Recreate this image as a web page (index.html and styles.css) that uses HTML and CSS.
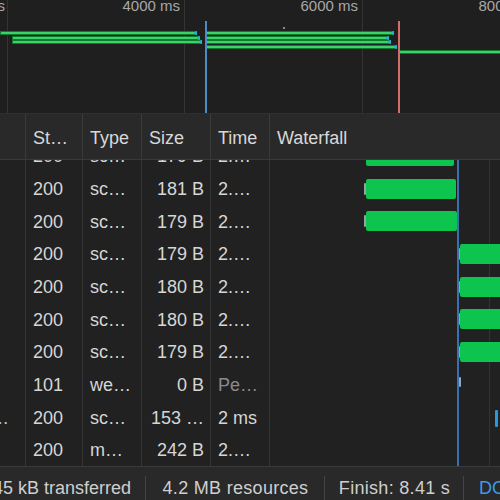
FILE: index.html
```html
<!DOCTYPE html>
<html>
<head>
<meta charset="utf-8">
<link rel="stylesheet" href="styles.css">
</head>
<body>
<div class="panel">
  <div class="overview">
    <div class="grid-line" style="left:7px"></div>
    <div class="grid-line" style="left:184px"></div>
    <div class="grid-line" style="left:362px"></div>
    <span class="tick" style="right:495px">2000 ms</span>
    <span class="tick" style="right:320px">4000 ms</span>
    <span class="tick" style="right:142px">6000 ms</span>
    <span class="tick" style="right:-36px">8000 ms</span>

    <div class="ov-bar" style="left:0;top:31px;width:193px"></div>
    <div class="ov-bar" style="left:12px;top:36px;width:184px"></div>
    <div class="ov-bar" style="left:12px;top:40px;width:186px"></div>

    <div class="ov-bar" style="left:205px;top:31px;width:185px"></div>
    <div class="ov-bar" style="left:205px;top:36px;width:180px"></div>
    <div class="ov-bar" style="left:205px;top:40px;width:182px"></div>
    <div class="ov-bar" style="left:205px;top:45px;width:188px"></div>

    <div class="ov-bar plain" style="left:399px;top:50px;width:110px"></div>
    <div class="ov-dot" style="left:283px;top:27px"></div>

    <div class="ov-line dcl" style="left:205px"></div>
    <div class="ov-line load" style="left:398px"></div>
  </div>

  <div class="row header">
    <div class="cell name"></div>
    <div class="cell">St…</div>
    <div class="cell">Type</div>
    <div class="cell">Size</div>
    <div class="cell">Time</div>
    <div class="cell">Waterfall</div>
  </div>

  <div class="rows">
    <div class="wf-grid" style="left:489px"></div>
    <div class="rows-inner">
      <div class="row">
        <div class="cell name"></div><div class="cell">200</div><div class="cell">sc…</div><div class="cell num">179 B</div><div class="cell">2.…</div>
        <div class="cell wf"><div class="wbar" style="left:96px;width:88px"></div></div>
      </div>
      <div class="row">
        <div class="cell name"></div><div class="cell">200</div><div class="cell">sc…</div><div class="cell num">181 B</div><div class="cell">2.…</div>
        <div class="cell wf"><div class="stub" style="left:94px"></div><div class="wbar" style="left:96px;width:90px"></div></div>
      </div>
      <div class="row">
        <div class="cell name"></div><div class="cell">200</div><div class="cell">sc…</div><div class="cell num">179 B</div><div class="cell">2.…</div>
        <div class="cell wf"><div class="stub" style="left:94px"></div><div class="wbar" style="left:96px;width:91px"></div></div>
      </div>
      <div class="row">
        <div class="cell name"></div><div class="cell">200</div><div class="cell">sc…</div><div class="cell num">179 B</div><div class="cell">2.…</div>
        <div class="cell wf"><div class="stub" style="left:188px"></div><div class="wbar" style="left:190px;width:60px"></div></div>
      </div>
      <div class="row">
        <div class="cell name"></div><div class="cell">200</div><div class="cell">sc…</div><div class="cell num">180 B</div><div class="cell">2.…</div>
        <div class="cell wf"><div class="stub" style="left:188px"></div><div class="wbar" style="left:190px;width:60px"></div></div>
      </div>
      <div class="row">
        <div class="cell name"></div><div class="cell">200</div><div class="cell">sc…</div><div class="cell num">180 B</div><div class="cell">2.…</div>
        <div class="cell wf"><div class="stub" style="left:188px"></div><div class="wbar" style="left:190px;width:60px"></div></div>
      </div>
      <div class="row">
        <div class="cell name"></div><div class="cell">200</div><div class="cell">sc…</div><div class="cell num">179 B</div><div class="cell">2.…</div>
        <div class="cell wf"><div class="stub" style="left:188px"></div><div class="wbar" style="left:190px;width:60px"></div></div>
      </div>
      <div class="row">
        <div class="cell name"></div><div class="cell">101</div><div class="cell">we…</div><div class="cell num">0 B</div><div class="cell dim">Pe…</div>
        <div class="cell wf"><div class="stub ws" style="left:189px"></div></div>
      </div>
      <div class="row">
        <div class="cell name trunc">…</div><div class="cell">200</div><div class="cell">sc…</div><div class="cell num">153 …</div><div class="cell">2 ms</div>
        <div class="cell wf"><div class="bbar" style="left:225px"></div></div>
      </div>
      <div class="row">
        <div class="cell name"></div><div class="cell">200</div><div class="cell">m…</div><div class="cell num">242 B</div><div class="cell">2.…</div>
        <div class="cell wf"></div>
      </div>
    </div>
    <div class="wf-dcl" style="left:457px"></div>
  </div>

  <div class="footer">
    <span class="fitem first">45 kB transferred</span>
    <span class="fitem mid res">4.2 MB resources</span>
    <span class="fitem mid fin">Finish: 8.41 s</span>
    <span class="fitem last">DOMContentLoaded: 2.66 s</span>
  </div>
</div>
</body>
</html>
```

FILE: styles.css
```css
html, body {
  margin: 0;
  padding: 0;
  width: 500px;
  height: 500px;
  overflow: hidden;
  background: #202020;
}

.panel {
  width: 500px;
  height: 500px;
  display: flex;
  flex-direction: column;
  font-family: "Liberation Sans", Arial, sans-serif;
  font-size: 18px;
  color: #d6d6d6;
  white-space: nowrap;
  overflow: hidden;
}

/* ---------- overview timeline ---------- */
.overview {
  position: relative;
  height: 113px;
  flex: none;
  background: #1f1f1f;
  border-bottom: 1px solid #2f2f2f;
  overflow: hidden;
}

.grid-line {
  position: absolute;
  top: 0;
  bottom: 0;
  width: 1px;
  background: #343434;
}

.tick {
  position: absolute;
  top: -2px;
  font-size: 15px;
  line-height: 15px;
  color: #a8a8a8;
}

.ov-bar {
  position: absolute;
  height: 2px;
  background: #3ad36a;
  border: 1px solid #12792f;
  border-right: 3px solid #2bb3c9;
}

.ov-bar.plain {
  border-right: 1px solid #12792f;
}

.ov-dot {
  position: absolute;
  width: 2px;
  height: 2px;
  background: #8a8a8a;
}

.ov-line {
  position: absolute;
  top: 21px;
  bottom: 0;
  width: 2px;
}

.ov-line.dcl {
  background: #4a8cc8;
}

.ov-line.load {
  background: #d36d68;
}

/* ---------- table ---------- */
.row {
  display: grid;
  grid-template-columns: 25px 57px 59px 69px 59px 1fr;
  height: 32.67px;
}

.cell {
  display: flex;
  align-items: center;
  padding: 3px 0 0 7px;
  border-left: 1px solid #363636;
  overflow: hidden;
}

.cell.name {
  border-left: none;
  padding: 3px 0 0 0;
}

.cell.trunc {
  justify-content: flex-end;
  padding-right: 16px;
  color: #c8c8c8;
}

.cell.num {
  justify-content: flex-end;
  padding: 3px 6px 0 0;
}

.cell.dim {
  color: #8a8a8a;
}

.header {
  height: 45px;
  flex: none;
  background: #292929;
  border-bottom: 1px solid #3a3a3a;
  color: #d8d8d8;
}

.header .cell {
  border-left-color: #3a3a3a;
}

.rows {
  position: relative;
  height: 306px;
  flex: none;
  overflow: hidden;
  background: #212121;
}

.rows-inner {
  position: relative;
  margin-top: -21px;
}

.cell.wf {
  position: relative;
  padding: 0;
}

.wbar {
  position: absolute;
  top: 7px;
  height: 20px;
  border-radius: 2px;
  background: #0dc44f;
}

.stub {
  position: absolute;
  top: 11px;
  width: 2px;
  height: 12px;
  background: #9ca0a4;
  border-radius: 1px;
}

.stub.ws {
  top: 9px;
  height: 10px;
  background: #8fa8bf;
}

.bbar {
  position: absolute;
  top: 10px;
  width: 3px;
  height: 17px;
  background: #2e96da;
  border-radius: 1px;
}

.wf-grid {
  position: absolute;
  top: 0;
  bottom: 0;
  width: 1px;
  background: #333333;
}

.wf-dcl {
  position: absolute;
  top: 0;
  bottom: 0;
  width: 2px;
  background: #3a6fb0;
}

/* ---------- footer ---------- */
.footer {
  flex: 1;
  display: flex;
  align-items: stretch;
  background: #292929;
  border-top: 1px solid #3a3a3a;
  color: #cfcfcf;
}

.fitem {
  flex: none;
  display: flex;
  align-items: center;
  padding-top: 9px;
  box-sizing: border-box;
  position: relative;
}

.fitem::after {
  content: "";
  position: absolute;
  right: 0;
  top: 9px;
  width: 1px;
  height: 24px;
  background: #444444;
}

.fitem.first {
  width: 146px;
  justify-content: flex-end;
  padding-right: 15px;
}

.fitem.mid {
  justify-content: center;
  letter-spacing: 0.3px;
}

.fitem.res {
  width: 179px;
}

.fitem.fin {
  width: 139px;
}

.fitem.last {
  padding-left: 15px;
  color: #3f9ae6;
}

.fitem.last::after {
  display: none;
}
```
